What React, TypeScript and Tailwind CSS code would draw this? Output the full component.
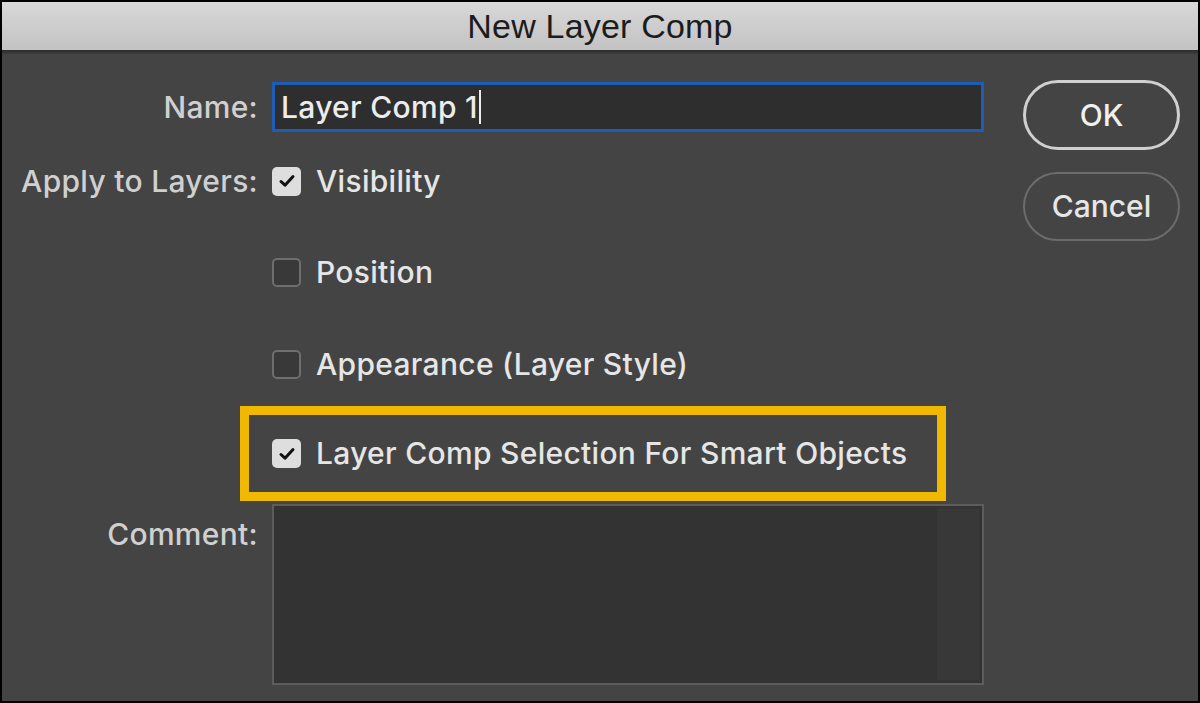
import { ReactNode } from "react";

function CheckBox({ checked }: { checked?: boolean }) {
  if (checked) {
    return (
      <div className="w-[29px] h-[29px] rounded-[5px] bg-[#dedede] flex items-center justify-center shrink-0">
        <svg width="20" height="20" viewBox="0 0 20 20" fill="none">
          <path d="M4 10.5 L8 14.2 L16 5.5" stroke="#111" strokeWidth="3" strokeLinecap="round" strokeLinejoin="round" />
        </svg>
      </div>
    );
  }
  return <div className="w-[29px] h-[29px] rounded-[5px] bg-[#393939] border-2 border-[#6e6e6e] shrink-0" />;
}

function Option({ checked, children }: { checked?: boolean; children: ReactNode }) {
  return (
    <div className="flex items-center h-[40px] gap-[15px]">
      <CheckBox checked={checked} />
      <span className="text-[30px] font-medium tracking-[0.3px] text-[#e6e6e6]">{children}</span>
    </div>
  );
}

const label = "text-right text-[30px] font-medium tracking-[0.3px] text-[#d0d0d0]";

export default function App() {
  return (
    <div
      className="w-[1200px] h-[703px] bg-black p-[2px] overflow-hidden"
      style={{ fontFamily: "Inter, 'Open Sans', sans-serif" }}
    >
      <div className="w-full h-full flex flex-col bg-[#444444]">
        {/* title bar */}
        <div className="h-[48px] shrink-0 bg-gradient-to-b from-[#d8d8d8] to-[#c3c3c3] flex items-center justify-center">
          <span
            className="text-[34px] text-[#1c1c1c] tracking-[0.2px] leading-none"
            style={{ fontFamily: "'Liberation Sans', Arial, sans-serif" }}
          >
            New Layer Comp
          </span>
        </div>
        <div className="h-[5px] shrink-0 bg-gradient-to-b from-[#2a2a2a] to-[#444444]" />

        <div className="flex flex-1">
          <div className="w-[982px] flex flex-col">
            {/* name */}
            <div className="flex items-center mt-[27px]">
              <div className={`w-[256px] ${label}`}>Name:</div>
              <div className="ml-[14px] w-[712px] h-[50px] border-[3px] border-[#1d5db5] bg-[#2e2e2e] flex items-center pl-[6px]">
                <span className="text-[30px] font-medium tracking-[0.3px] text-[#ececec]">Layer Comp 1</span>
                <span className="w-[2px] h-[34px] bg-[#ececec] ml-[1px]" />
              </div>
            </div>

            {/* apply to layers */}
            <div className="flex mt-[29px]">
              <div className={`w-[256px] h-[40px] flex items-center justify-end shrink-0 ${label}`}>
                Apply to Layers:
              </div>
              <div className="ml-[14px]">
                <Option checked>Visibility</Option>
              </div>
            </div>
            <div className="ml-[270px] mt-[51px]">
              <Option>Position</Option>
            </div>
            <div className="ml-[270px] mt-[52px]">
              <Option>Appearance (Layer Style)</Option>
            </div>

            {/* highlighted option */}
            <div className="ml-[238px] mt-[22px] w-[706px] h-[95px] border-[9px] border-[#f0b800] flex items-center pl-[23px]">
              <Option checked>Layer Comp Selection For Smart Objects</Option>
            </div>

            {/* comment */}
            <div className="flex mt-[3px]">
              <div className={`w-[256px] pt-[8px] ${label}`}>Comment:</div>
              <div className="ml-[14px] w-[712px] h-[181px] border-2 border-[#5c5c5c] bg-[#333333] flex justify-end p-[3px]">
                <div className="w-[42px] h-full bg-[#383838]" />
              </div>
            </div>
          </div>

          {/* buttons */}
          <div className="ml-[39px] flex flex-col mt-[25px] gap-[22px]">
            <button className="w-[157px] h-[70px] rounded-full border-[3px] border-[#d0d0d0] text-[30px] text-[#f0f0f0] font-medium">
              OK
            </button>
            <button className="w-[157px] h-[69px] rounded-full border-2 border-[#6c6c6c] text-[30px] text-[#e6e6e6] font-medium">
              Cancel
            </button>
          </div>
        </div>
      </div>
    </div>
  );
}
